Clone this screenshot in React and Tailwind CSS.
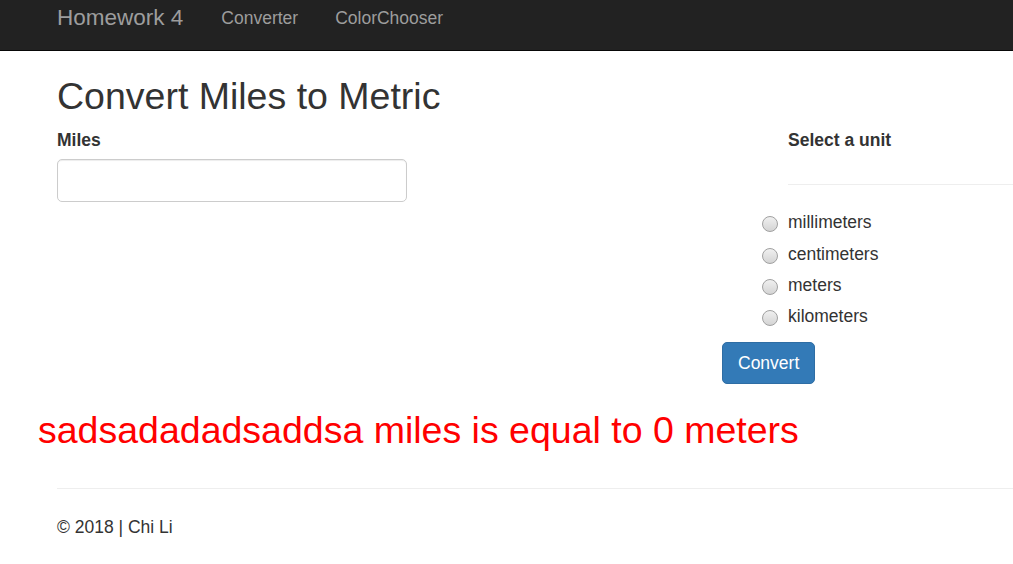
import { useState } from 'react';

const units = ['millimeters', 'centimeters', 'meters', 'kilometers'];

const App = () => {
  const [miles, setMiles] = useState('');
  const [unit, setUnit] = useState('');

  return (
    <div className="min-h-screen w-full overflow-hidden bg-white text-[#333] font-['Liberation_Sans',Arial,sans-serif] text-[17.5px] leading-[25px]">
      <nav className="h-[51px] bg-[#222] border-b border-[#080808] flex items-start text-[#9d9d9d]">
        <a href="#" className="ml-[57px] mt-[7px] text-[22.5px] leading-[22.5px]">
          Homework 4
        </a>
        <a href="#" className="ml-[38px] mt-[10px] leading-[17.5px]">
          Converter
        </a>
        <a href="#" className="ml-[37px] mt-[10px] leading-[17.5px]">
          ColorChooser
        </a>
      </nav>

      <div className="pl-[57px]">
        <h1 className="mt-[25px] text-[37.5px] leading-[41.25px]">
          Convert Miles to Metric
        </h1>

        <div className="flex mt-[11px]">
          <div className="w-[665px]">
            <label htmlFor="miles" className="block font-bold">
              Miles
            </label>
            <input
              id="miles"
              type="text"
              value={miles}
              onChange={(e) => setMiles(e.target.value)}
              className="mt-[6px] block w-[350px] h-[43px] px-3 border border-[#ccc] rounded-[5px] shadow-[inset_0_1px_1px_rgba(0,0,0,0.075)] outline-none"
            />
          </div>

          <div className="flex-1">
            <div className="pl-[66px]">
              <label className="block font-bold">Select a unit</label>
              <hr className="mt-[31px] mb-[25px] border-0 border-t border-[#eee]" />
            </div>
            <div className="flex flex-col gap-[6.25px] pl-[40px]">
              {units.map((u) => (
                <label key={u} className="flex items-start gap-[10px] cursor-pointer">
                  <input
                    type="radio"
                    name="unit"
                    value={u}
                    checked={unit === u}
                    onChange={() => setUnit(u)}
                    className="sr-only"
                  />
                  <span className="mt-[6px] shrink-0 w-[16px] h-[16px] rounded-full border border-[#a0a0a0] bg-gradient-to-b from-[#f0f0f0] to-[#d4d4d4]" />
                  <span>{u}</span>
                </label>
              ))}
            </div>
            <button
              type="button"
              className="mt-[13px] h-[42px] px-[15px] bg-[#337ab7] border border-[#2e6da4] rounded-[5px] text-white"
            >
              Convert
            </button>
          </div>
        </div>
      </div>

      <h2 className="mt-[26px] ml-[38px] text-[37.5px] leading-[41.25px] text-[#ff0000]">
        sadsadadadsaddsa miles is equal to 0 meters
      </h2>

      <div className="pl-[57px]">
        <hr className="mt-[37px] border-0 border-t border-[#eee]" />
        <footer className="mt-[26px]">© 2018 | Chi Li</footer>
      </div>
    </div>
  );
};

export default App;
